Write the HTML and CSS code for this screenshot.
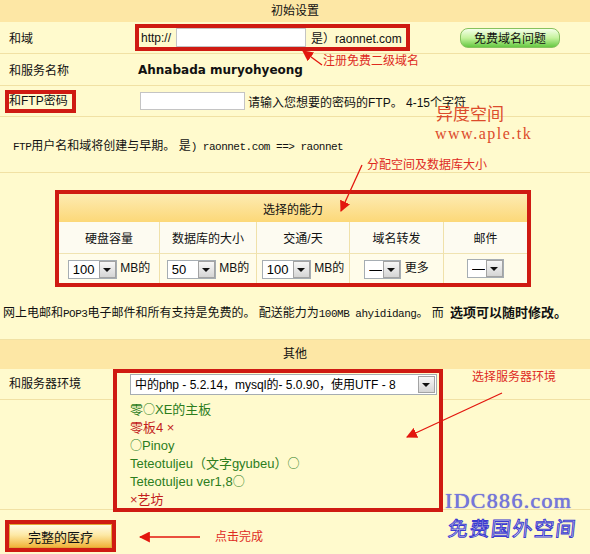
FILE: index.html
```html
<!DOCTYPE html>
<html lang="zh-CN">
  <head>
    <meta charset="UTF-8" />
    <meta name="viewport" content="width=device-width, initial-scale=1.0" />
    <title>初始设置</title>
    <link rel="stylesheet" href="styles.css">
  </head>
  <body>
    <div class="page">
      <div class="bar">初始设置</div>

      <!-- 域名 -->
      <div class="row row-domain">
        <div class="label">和域</div>
        <div class="field">
          <span class="mark mark-domain">http://<input type="text" class="txt txt-domain" />是）raonnet.com</span>
          <button type="button" class="btn-green">免费域名问题</button>
        </div>
      </div>

      <div class="row row-name">
        <div class="label">和服务名称</div>
        <div class="field"><b class="site-name">Ahnabada muryohyeong</b></div>
      </div>

      <div class="row row-ftp">
        <div class="label"><span class="mark mark-label">和FTP密码</span></div>
        <div class="field">
          <input type="password" class="txt txt-pass" />请输入您想要的密码的FTP。 4-15个字符
        </div>
      </div>

      <div class="row row-note">
        <p class="note"><span class="mono">FTP</span>用户名和域将创建与早期。 是<span class="mono">) raonnet.com ==> raonnet</span></p>
      </div>

      <!-- 空间大小 -->
      <div class="capacity">
        <table class="cap-table">
          <colgroup>
            <col style="width: 101px" />
            <col style="width: 97px" />
            <col style="width: 93px" />
            <col style="width: 94px" />
            <col style="width: 83px" />
          </colgroup>
          <tr>
            <th colspan="5" class="cap-head">选择的能力</th>
          </tr>
          <tr class="cap-cols">
            <td>硬盘容量</td>
            <td>数据库的大小</td>
            <td>交通/天</td>
            <td>域名转发</td>
            <td>邮件</td>
          </tr>
          <tr class="cap-picks">
            <td><span class="pick"><select class="w-num"><option>100</option></select></span> MB的</td>
            <td><span class="pick"><select class="w-num"><option>50</option></select></span> MB的</td>
            <td><span class="pick"><select class="w-num"><option>100</option></select></span> MB的</td>
            <td><span class="pick"><select class="w-dash"><option>—</option></select></span> 更多</td>
            <td><span class="pick"><select class="w-dash"><option>—</option></select></span></td>
          </tr>
        </table>
        <p class="free-note">网上电邮和<span class="mono">POP3</span>电子邮件和所有支持是免费的。 配送能力为<span class="mono">100MB ahyididang</span>。 而 <b>选项可以随时修改。</b></p>
      </div>

      <div class="bar bar-other">其他</div>

      <!-- 服务器环境 -->
      <div class="env">
        <div class="env-side env-left"><div class="env-cell">和服务器环境</div></div>
        <div class="env-box">
          <span class="pick"><select class="w-env"><option>中的php - 5.2.14，mysql的- 5.0.90，使用UTF - 8</option></select></span>
          <ul class="skins">
            <li class="ok">零<span class="sym">○</span>XE的主板</li>
            <li class="no">零板4 ×</li>
            <li class="ok"><span class="sym">○</span>Pinoy</li>
            <li class="ok">Teteotuljeu（文字gyubeu）<span class="sym">○</span></li>
            <li class="ok">Teteotuljeu ver1,8<span class="sym">○</span></li>
            <li class="no">×艺坊</li>
          </ul>
        </div>
        <div class="env-side env-right"><div class="env-cell"></div></div>
      </div>

      <div class="submit-row">
        <span class="mark mark-submit"><button type="button" class="btn-submit">完整的医疗</button></span>
      </div>

      <!-- 标注 -->
      <svg class="arrows" width="590" height="554" viewBox="0 0 590 554">
        <defs>
          <marker id="head" viewBox="0 0 10 10" refX="9" refY="5" markerWidth="11" markerHeight="11" markerUnits="userSpaceOnUse" orient="auto">
            <path d="M0 0 L10 5 L0 10 z" fill="#e3160e" />
          </marker>
        </defs>
        <line x1="322" y1="65" x2="303" y2="51" marker-end="url(#head)" />
        <line x1="362" y1="165" x2="341" y2="211" marker-end="url(#head)" />
        <line x1="502" y1="393" x2="407" y2="437" marker-end="url(#head)" />
        <line x1="200" y1="537" x2="140" y2="537" marker-end="url(#head)" />
      </svg>
      <span class="tip tip-domain">注册免费二级域名</span>
      <span class="tip tip-size">分配空间及数据库大小</span>
      <span class="tip tip-env">选择服务器环境</span>
      <span class="tip tip-done">点击完成</span>

      <div class="stamp-aple">异度空间<span>www.aple.tk</span></div>
      <div class="stamp-idc">IDC886.com<span>免费国外空间</span></div>
    </div>
  </body>
</html>
```

FILE: styles.css
```css
body {
  margin: 0;
  background-color: #fffacd;
  font-family: "Liberation Sans", "Noto Sans CJK SC", sans-serif;
  font-size: 12px;
  color: #111;
}

.page {
  position: relative;
  width: 590px;
  height: 554px;
  overflow: hidden;
}

.bar {
  height: 22px;
  line-height: 22px;
  text-align: center;
  background-color: #fde7a5;
}

.bar-other {
  height: 29px;
  line-height: 29px;
}

.row {
  display: flex;
  align-items: center;
  border-bottom: 1px solid #f1e1a4;
}

.row-domain,
.row-name {
  height: 31px;
}

.row-ftp {
  height: 30px;
}

.row-note {
  height: 55px;
}

.label {
  width: 135px;
  padding-left: 9px;
  box-sizing: border-box;
  flex: none;
}

.field {
  display: flex;
  align-items: center;
}

.mark {
  border: 4px solid #cf1a12;
}

.mark-domain {
  display: inline-flex;
  align-items: center;
  height: 19px;
  width: 265px;
  padding-left: 2px;
}

.row-ftp .label {
  padding-left: 5px;
}

.mark-label {
  display: inline-block;
  line-height: 15px;
  padding: 0 4px 0 0;
}

.txt {
  border: 1px solid #c4c4c4;
  background-color: white;
  padding: 0;
  margin: 0;
  box-sizing: border-box;
}

.txt-domain {
  width: 130px;
  height: 19px;
  margin: 0 5px 0 5px;
}

.txt-pass {
  width: 105px;
  height: 18px;
  margin: 0 3px 0 5px;
}

.btn-green {
  margin-left: 50px;
  width: 100px;
  height: 20px;
  padding: 0;
  border: 1px solid #87c25f;
  border-radius: 8px;
  background: linear-gradient(#f5ffe9, #c4f29c 50%, #66c842);
  font-family: "Liberation Sans", "Noto Sans CJK SC", sans-serif;
  font-size: 12px;
  color: #111;
}

.site-name {
  margin-left: 3px;
  font-family: "DejaVu Sans", sans-serif;
  font-size: 12px;
}

.note {
  margin: 0 0 0 13px;
}

.mono {
  font-family: "Liberation Mono", monospace;
  font-size: 11px;
  letter-spacing: -0.5px;
}

/* 空间大小 */
.capacity {
  padding: 17px 0 17px;
  border-bottom: 1px solid #f1e1a4;
}

.cap-table {
  margin-left: 55px;
  width: 476px;
  border: 4px solid #cf1a12;
  border-spacing: 0;
  table-layout: fixed;
}

.cap-table td {
  text-align: center;
  padding: 0;
  border-right: 1px solid #f0e1aa;
}

.cap-table td:last-child {
  border-right: none;
}

.cap-head {
  height: 28px;
  padding: 0;
  font-weight: normal;
  background: linear-gradient(#fdebb2, #fcd878);
}

.cap-cols td {
  height: 31px;
  background-color: #fdfbf1;
  border-bottom: 1px solid #f0e3b2;
  font-size: 12px;
}

.cap-picks td {
  height: 29px;
  background-color: #fffcea;
}

.free-note {
  margin: 18px 0 0 3px;
  line-height: 16px;
  white-space: nowrap;
}

.free-note b {
  margin-left: 3px;
  font-size: 13px;
}

/* 下拉框 */
.pick {
  position: relative;
  display: inline-block;
  vertical-align: middle;
}

.pick select {
  -webkit-appearance: none;
  appearance: none;
  display: block;
  height: 19px;
  margin: 0;
  padding: 0 18px 0 4px;
  border: 1px solid #a6adb3;
  border-radius: 0;
  background-color: white;
  font-family: "Liberation Sans", "Noto Sans CJK SC", sans-serif;
  font-size: 13px;
  color: #000;
}

.pick::after {
  content: "";
  position: absolute;
  top: 1px;
  right: 1px;
  width: 15px;
  height: 15px;
  border: 1px solid #a3a3a3;
  background: linear-gradient(#f7f7f7, #d5d5d5);
}

.pick::before {
  content: "";
  position: absolute;
  z-index: 1;
  top: 8px;
  right: 6px;
  border-left: 4px solid transparent;
  border-right: 4px solid transparent;
  border-top: 4px solid #111;
}

.w-num { width: 49px; }
.w-dash { width: 37px; }

.pick .w-env {
  width: 307px;
  height: 21px;
  font-size: 12px;
}

.env .pick::after {
  top: 2px;
  right: 2px;
}

.env .pick::before {
  top: 9px;
  right: 7px;
}

/* 服务器环境 */
.env {
  display: flex;
  height: 140px;
  border-bottom: 1px solid #f1e1a4;
}

.env-side {
  flex: none;
}

.env-left {
  width: 113px;
}

.env-right {
  flex: 1;
}

.env-cell {
  height: 30px;
  line-height: 30px;
  padding-left: 9px;
  border-bottom: 1px solid #f1e1a4;
}

.env-box {
  flex: none;
  align-self: flex-start;
  width: 330px;
  height: 143px;
  box-sizing: border-box;
  border: 4px solid #cf1a12;
  padding: 1px 0 0 13px;
}

.skins {
  list-style: none;
  margin: 6px 0 0;
  padding: 0;
  font-size: 13px;
  line-height: 18px;
}

.skins li {
  height: 18px;
}

.skins .ok {
  color: #2c7d1d;
}

.skins .no {
  color: #c31d1d;
}

.sym {
  font-family: "Noto Sans CJK SC", sans-serif;
  font-size: 12px;
  line-height: 1;
}

.submit-row {
  padding: 10px 0 0 5px;
}

.mark-submit {
  display: inline-block;
  line-height: 0;
}

.btn-submit {
  width: 103px;
  height: 24px;
  padding: 0;
  border: 1px solid #e2a637;
  background: linear-gradient(#fffbe6, #fde9a6 45%, #f1b43a);
  font-family: "Liberation Sans", "Noto Sans CJK SC", sans-serif;
  font-size: 13px;
  color: #111;
}

/* 标注 */
.arrows {
  position: absolute;
  top: 0;
  left: 0;
  pointer-events: none;
}

.arrows line {
  stroke: #e3160e;
  stroke-width: 1.3;
}

.tip {
  position: absolute;
  color: #de2a1f;
  font-size: 12px;
  line-height: 14px;
  white-space: nowrap;
}

.tip-domain { left: 323px; top: 54px; }
.tip-size { left: 367px; top: 158px; }
.tip-env { left: 472px; top: 370px; }
.tip-done { left: 215px; top: 530px; }

.stamp-aple {
  position: absolute;
  left: 436px;
  top: 105px;
  color: #dc4b2b;
  font-size: 17px;
  line-height: 19px;
}

.stamp-aple span {
  display: block;
  margin-left: -1px;
  font-family: "Liberation Serif", serif;
  font-size: 16px;
  letter-spacing: 1.5px;
}

.stamp-idc {
  position: absolute;
  left: 445px;
  top: 489px;
  color: #7676de;
  font-family: "Liberation Serif", serif;
  font-size: 22px;
  line-height: 24px;
  letter-spacing: 1.3px;
  text-shadow: 0 0 1px #4a4ac0;
}

.stamp-idc span {
  display: block;
  margin: 2px 0 0 3px;
  font-family: "Noto Sans CJK SC", sans-serif;
  font-size: 20px;
  line-height: 26px;
  letter-spacing: 1.5px;
  color: #fffaf0;
  -webkit-text-stroke: 1px #3b3bd0;
  text-shadow: none;
  transform: skewX(-6deg);
}
```
